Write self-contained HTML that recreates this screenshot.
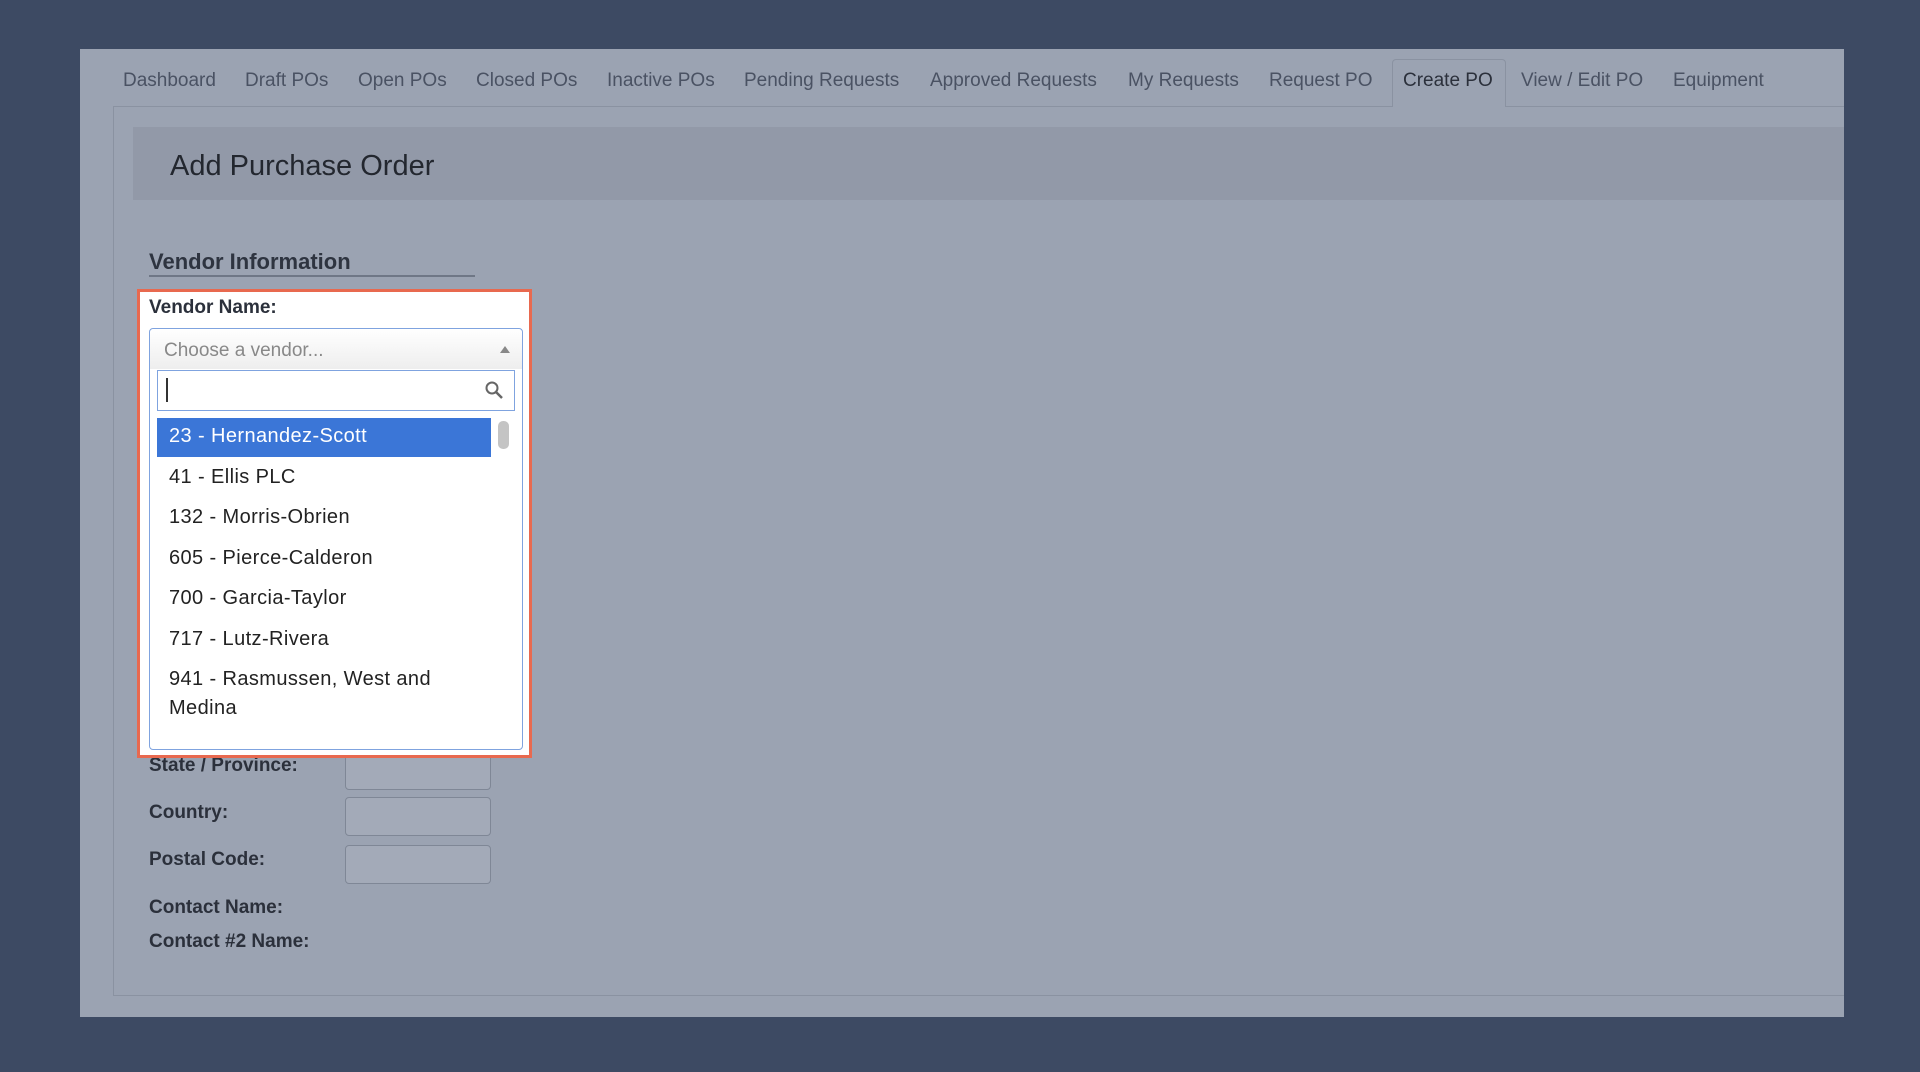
<!DOCTYPE html>
<html><head><style>
*{margin:0;padding:0;box-sizing:border-box}
body{width:1920px;height:1072px;background:#3d4a63;font-family:"Liberation Sans",sans-serif;position:relative;overflow:hidden}
.abs{position:absolute;white-space:nowrap}
.panel{left:80px;top:49px;width:1764px;height:968px;background:#9ba3b2}
.tab{position:absolute;top:70px;font-size:19px;color:#4a5263;white-space:nowrap}
.lbl{position:absolute;font-weight:bold;font-size:19px;color:#2b303b;white-space:nowrap}
.inp{position:absolute;left:345px;width:146px;height:39px;border:1px solid #7f8796;border-radius:4px;background:#a3aab8}
.item{position:absolute;left:169px;font-size:20px;letter-spacing:0.4px;color:#222;white-space:nowrap}
</style></head><body>
<div class="abs panel"></div>
<div class="tab" style="left:123px">Dashboard</div>
<div class="tab" style="left:245px">Draft POs</div>
<div class="tab" style="left:358px">Open POs</div>
<div class="tab" style="left:476px">Closed POs</div>
<div class="tab" style="left:607px">Inactive POs</div>
<div class="tab" style="left:744px">Pending Requests</div>
<div class="tab" style="left:930px">Approved Requests</div>
<div class="tab" style="left:1128px">My Requests</div>
<div class="tab" style="left:1269px">Request PO</div>
<div class="abs" style="left:1392px;top:59px;width:114px;height:48px;border:1px solid #8a92a1;border-bottom:none;background:#9ba3b2;border-radius:4px 4px 0 0;z-index:2"></div>
<div class="tab" style="left:1403px;color:#2b303b;z-index:3">Create PO</div>
<div class="tab" style="left:1521px">View / Edit PO</div>
<div class="tab" style="left:1673px">Equipment</div>
<div class="abs" style="left:113px;top:106px;width:1731px;height:890px;border:1px solid #8a92a1;border-right:none;z-index:1"></div>
<div class="abs" style="left:133px;top:127px;width:1711px;height:73px;background:#9299a8"></div>
<div class="abs" style="left:170px;top:150px;font-size:29px;color:#23272f">Add Purchase Order</div>
<div class="abs" style="left:149px;top:249px;font-size:22px;font-weight:bold;color:#2e3440">Vendor Information</div>
<div class="abs" style="left:149px;top:275px;width:326px;height:2px;background:#6f7786"></div>
<div class="lbl" style="left:149px;top:755px">State / Province:</div>
<div class="lbl" style="left:149px;top:802px">Country:</div>
<div class="lbl" style="left:149px;top:849px">Postal Code:</div>
<div class="lbl" style="left:149px;top:897px">Contact Name:</div>
<div class="lbl" style="left:149px;top:931px">Contact #2 Name:</div>
<div class="inp" style="top:751px"></div>
<div class="inp" style="top:797px"></div>
<div class="inp" style="top:845px"></div>
<div class="abs" style="left:137px;top:289px;width:395px;height:469px;background:#fff;border:3px solid #e8694f;z-index:5"></div>
<div class="abs" style="z-index:6;left:0;top:0;width:1920px;height:1072px">
<div class="lbl" style="left:149px;top:297px">Vendor Name:</div>
<div class="abs" style="left:149px;top:328px;width:374px;height:422px;border:1.5px solid #7fa3df;border-radius:4px;background:#fff"></div>
<div class="abs" style="left:150px;top:329px;width:372px;height:40px;background:linear-gradient(#fff,#eee);border-radius:4px 4px 0 0"></div>
<div class="abs" style="left:164px;top:340px;font-size:19px;color:#888">Choose a vendor...</div>
<div class="abs" style="left:500px;top:346px;width:0;height:0;border-left:5px solid transparent;border-right:5px solid transparent;border-bottom:7px solid #888"></div>
<div class="abs" style="left:157px;top:370px;width:358px;height:41px;border:1.5px solid #7fa3df;background:#fff"></div>
<div class="abs" style="left:166px;top:378px;width:2px;height:24px;background:#333"></div>
<svg class="abs" style="left:484px;top:380px" width="20" height="20" viewBox="0 0 20 20"><circle cx="8" cy="8" r="5.5" fill="none" stroke="#666" stroke-width="2"/><path d="M12 12l6 6" stroke="#666" stroke-width="2.5"/></svg>
<div class="abs" style="left:157px;top:418px;width:334px;height:39px;background:#3b76d7"></div>
<div class="abs" style="left:498px;top:421px;width:11px;height:28px;background:#c4c4c4;border-radius:5px"></div>
<div class="item" style="top:425px;color:#fff">23 - Hernandez-Scott</div>
<div class="item" style="top:466px">41 - Ellis PLC</div>
<div class="item" style="top:506px">132 - Morris-Obrien</div>
<div class="item" style="top:547px">605 - Pierce-Calderon</div>
<div class="item" style="top:587px">700 - Garcia-Taylor</div>
<div class="item" style="top:628px">717 - Lutz-Rivera</div>
<div class="item" style="top:665px;line-height:29px">941 - Rasmussen, West and<br>Medina</div>
</div>
</body></html>
